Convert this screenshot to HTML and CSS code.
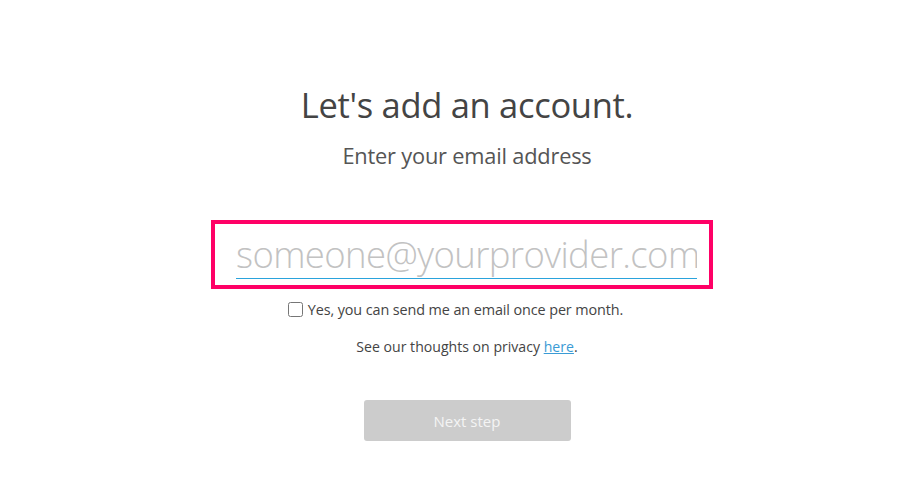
FILE: index.html
```html
<!DOCTYPE html>
<html lang="en">
<head>
  <meta charset="UTF-8">
  <title>Add an account</title>
  <link rel="stylesheet" href="styles.css">
</head>
<body>

<div class="wizard">
  <h1 class="title">Let's add an account.</h1>
  <p class="subtitle">Enter your email address</p>

  <form class="account-form">
    <div class="email-frame">
      <input type="email" class="email-input" placeholder="someone@yourprovider.com">
    </div>

    <label class="optin">
      <input type="checkbox" class="optin-box">
      <span>Yes, you can send me an email once per month.</span>
    </label>

    <p class="privacy">See our thoughts on privacy <a href="#">here</a>.</p>

    <button type="submit" class="next-btn" disabled>Next step</button>
  </form>
</div>

</body>
</html>
```

FILE: styles.css
```css
* {
  box-sizing: border-box;
}
body {
  margin: 0;
  font-family: 'Open Sans', 'Noto Sans', sans-serif;
  background: #ffffff;
  color: #444444;
}
.wizard {
  display: flex;
  flex-direction: column;
  align-items: center;
  padding-top: 82px;
  padding-left: 10px;
}
.title {
  margin: 0;
  font-size: 34.5px;
  font-weight: 400;
  line-height: 46px;
  color: #444444;
  letter-spacing: -0.3px;
}
.subtitle {
  margin: 13px 0 0;
  font-size: 21.8px;
  line-height: 30px;
  color: #555555;
  letter-spacing: -0.2px;
}
.account-form {
  display: flex;
  flex-direction: column;
  align-items: center;
  margin-top: 49px;
}
.email-frame {
  width: 502px;
  height: 69px;
  margin-right: 10px;
  border: 4px solid #ff0066;
  padding: 8px 12px 0 21px;
}
.email-input {
  display: block;
  width: 100%;
  height: 47px;
  border: none;
  border-bottom: 1px solid #2aa3dc;
  padding: 0 0 3px;
  font-family: 'Open Sans', 'Noto Sans', sans-serif;
  font-weight: 300;
  font-size: 36.5px;
  line-height: 44px;
  color: #444444;
  outline: none;
  letter-spacing: -0.6px;
}
.email-input::placeholder {
  color: #c2c2c2;
}
.optin {
  display: flex;
  align-items: center;
  gap: 5px;
  margin-top: 11px;
  margin-right: 23px;
  font-size: 14.4px;
  color: #444444;
  letter-spacing: -0.1px;
}
.optin-box {
  width: 15px;
  height: 15px;
  margin: 0;
}
.privacy {
  margin: 18px 0 0;
  font-size: 14.1px;
  color: #444444;
}
.privacy a {
  color: #3a9bd5;
}
.next-btn {
  margin-top: 44px;
  width: 207px;
  height: 41px;
  border: none;
  border-radius: 3px;
  background: #cccccc;
  color: #f4f4f4;
  font-family: 'Open Sans', 'Noto Sans', sans-serif;
  font-size: 15px;
}
```
